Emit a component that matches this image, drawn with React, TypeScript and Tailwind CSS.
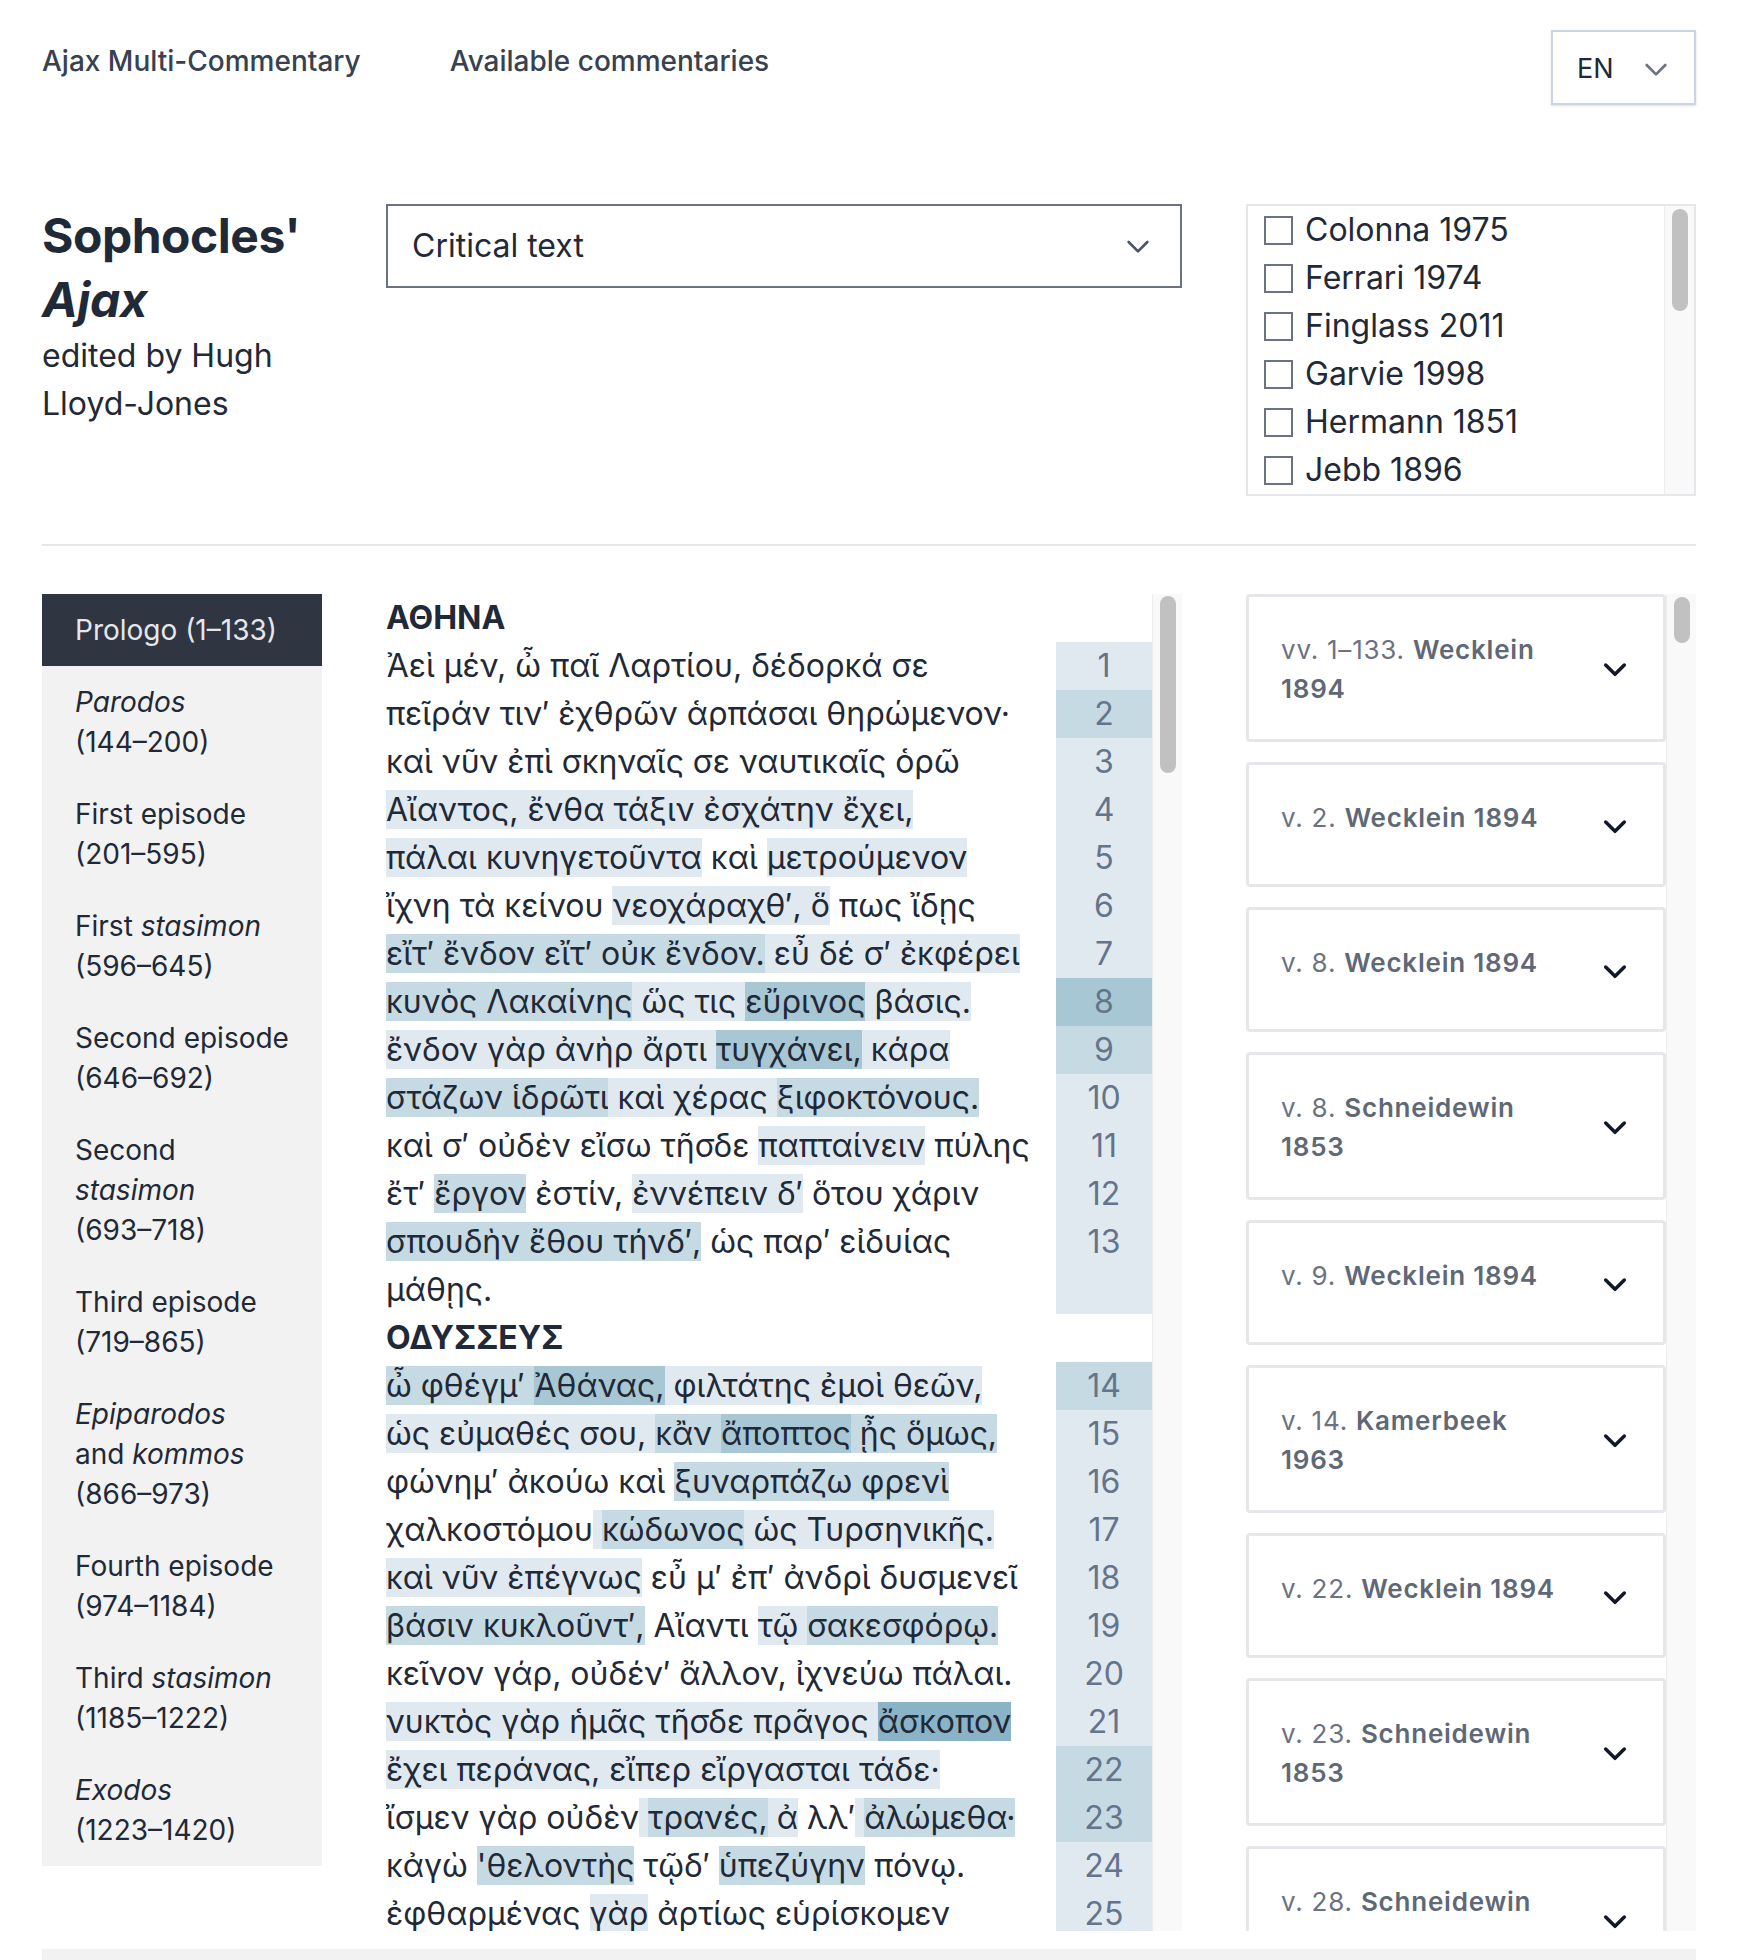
import React from 'react';

type Seg = [string, number];
type Verse = { n: number; level: number; segs: Seg[] };
type Block = { speaker: string; verses: Verse[] };

const tone = ['', 'bg-[#e1e9f0]', 'bg-[#c6dae3]', 'bg-[#a8c7d4]', 'bg-[#8bb3c7]'];

const blocks: Block[] = [
  {
    speaker: 'ΑΘΗΝΑ',
    verses: [
      { n: 1, level: 1, segs: [['Ἀεὶ μέν, ὦ παῖ Λαρτίου, δέδορκά σε', 0]] },
      { n: 2, level: 2, segs: [['πεῖράν τιν′ ἐχθρῶν ἁρπάσαι θηρώμενον·', 0]] },
      { n: 3, level: 1, segs: [['καὶ νῦν ἐπὶ σκηναῖς σε ναυτικαῖς ὁρῶ', 0]] },
      { n: 4, level: 1, segs: [['Αἴαντος, ἔνθα τάξιν ἐσχάτην ἔχει,', 1]] },
      { n: 5, level: 1, segs: [['πάλαι κυνηγετοῦντα', 1], [' καὶ ', 0], ['μετρούμενον', 1]] },
      { n: 6, level: 1, segs: [['ἴχνη τὰ κείνου ', 0], ['νεοχάραχθ′, ὅ', 1], [' πως ἴδῃς', 0]] },
      { n: 7, level: 1, segs: [['εἴτ′ ἔνδον εἴτ′ οὐκ ἔνδον.', 2], [' εὖ δέ σ′ ἐκφέρει', 1]] },
      { n: 8, level: 3, segs: [['κυνὸς Λακαίνης', 2], [' ὥς τις ', 1], ['εὔρινος', 3], [' βάσις.', 1]] },
      { n: 9, level: 2, segs: [['ἔνδον γὰρ ἀνὴρ ἄρτι ', 1], ['τυγχάνει,', 3], [' κάρα', 1]] },
      { n: 10, level: 1, segs: [['στάζων ἱδρῶτι', 2], [' καὶ χέρας ', 1], ['ξιφοκτόνους.', 2]] },
      { n: 11, level: 1, segs: [['καὶ σ′ οὐδὲν εἴσω τῆσδε ', 0], ['παπταίνειν', 1], [' πύλης', 0]] },
      { n: 12, level: 1, segs: [['ἔτ′ ', 0], ['ἔργον', 2], [' ἐστίν, ', 0], ['ἐννέπειν δ′', 1], [' ὅτου χάριν', 0]] },
      { n: 13, level: 1, segs: [['σπουδὴν ἔθου τήνδ′,', 2], [' ὡς παρ′ εἰδυίας μάθῃς.', 0]] },
    ],
  },
  {
    speaker: 'ΟΔΥΣΣΕΥΣ',
    verses: [
      { n: 14, level: 2, segs: [['ὦ φθέγμ′ ', 2], ['Ἀθάνας,', 3], [' φιλτάτης ἐμοὶ θεῶν,', 1]] },
      { n: 15, level: 1, segs: [['ὡς εὐμαθές σου, ', 1], ['κἂν ', 2], ['ἄποπτος', 3], [' ᾖς ὅμως,', 2]] },
      { n: 16, level: 1, segs: [['φώνημ′ ἀκούω καὶ ', 0], ['ξυναρπάζω φρενὶ', 2]] },
      { n: 17, level: 1, segs: [['χαλκοστόμου', 0], [' ', 1], ['κώδωνος', 2], [' ὡς Τυρσηνικῆς.', 1]] },
      { n: 18, level: 1, segs: [['καὶ νῦν ἐπέγνως', 1], [' εὖ μ′ ἐπ′ ἀνδρὶ δυσμενεῖ', 0]] },
      { n: 19, level: 1, segs: [['βάσιν κυκλοῦντ′,', 2], [' Αἴαντι ', 0], ['τῷ ', 1], ['σακεσφόρῳ.', 2]] },
      { n: 20, level: 1, segs: [['κεῖνον γάρ, οὐδέν′ ἄλλον, ἰχνεύω πάλαι.', 0]] },
      { n: 21, level: 1, segs: [['νυκτὸς γὰρ ἡμᾶς τῆσδε πρᾶγος ', 1], ['ἄσκοπον', 4]] },
      { n: 22, level: 2, segs: [['ἔχει περάνας, εἴπερ εἴργασται τάδε·', 1]] },
      { n: 23, level: 2, segs: [['ἴσμεν γὰρ οὐδὲν', 0], [' ', 1], ['τρανές,', 2], [' ἀ', 1], [' λλ′', 0], [' ', 1], ['ἀλώμεθα·', 2]] },
      { n: 24, level: 1, segs: [['κἀγὼ ', 0], ['\'θελοντὴς', 2], [' τῷδ′ ', 0], ['ὑπεζύγην', 2], [' πόνῳ.', 0]] },
      { n: 25, level: 1, segs: [['ἐφθαρμένας ', 0], ['γὰρ', 1], [' ἀρτίως εὑρίσκομεν', 0]] },
      { n: 26, level: 1, segs: [['λεηλατημένας καὶ κατηναρισμένας', 0]] },
      { n: 27, level: 1, segs: [['αὐτοῖς ποιμνίων ἐπιστάταις.', 0]] },
    ],
  },
];

const sections: React.ReactNode[] = [
  <>Prologo (1–133)</>,
  <><i>Parodos</i><br />(144–200)</>,
  <>First episode<br />(201–595)</>,
  <>First <i>stasimon</i><br />(596–645)</>,
  <>Second episode<br />(646–692)</>,
  <>Second<br /><i>stasimon</i><br />(693–718)</>,
  <>Third episode<br />(719–865)</>,
  <><i>Epiparodos</i><br />and <i>kommos</i><br />(866–973)</>,
  <>Fourth episode<br />(974–1184)</>,
  <>Third <i>stasimon</i><br />(1185–1222)</>,
  <><i>Exodos</i><br />(1223–1420)</>,
];

const editions = [
  'Colonna 1975',
  'Ferrari 1974',
  'Finglass 2011',
  'Garvie 1998',
  'Hermann 1851',
  'Jebb 1896',
  'Kamerbeek 1963',
  'Lobeck 1835',
];

const comments: [string, string][] = [
  ['vv. 1–133.', 'Wecklein 1894'],
  ['v. 2.', 'Wecklein 1894'],
  ['v. 8.', 'Wecklein 1894'],
  ['v. 8.', 'Schneidewin 1853'],
  ['v. 9.', 'Wecklein 1894'],
  ['v. 14.', 'Kamerbeek 1963'],
  ['v. 22.', 'Wecklein 1894'],
  ['v. 23.', 'Schneidewin 1853'],
  ['v. 28.', 'Schneidewin 1853'],
];

const Chevron = ({ className, width = 3 }: { className?: string; width?: number }) => (
  <svg viewBox="0 0 24 24" fill="none" stroke="currentColor" strokeWidth={width} strokeLinecap="round" strokeLinejoin="round" className={className}>
    <path d="M5 9l7 7 7-7" />
  </svg>
);

export default function App() {
  return (
    <div className="min-h-screen bg-white text-[#1f2937] font-['Inter','Noto_Sans',sans-serif]">
      <header className="flex items-start justify-between px-[42px] pt-[30px]">
        <nav className="flex gap-[89px] pt-[11px] text-[28px] leading-[40px] font-medium text-[#374151]">
          <span>Ajax Multi-Commentary</span>
          <span>Available commentaries</span>
        </nav>
        <div className="w-[145px] h-[75px] border-2 border-[#cbd5e1] shadow-sm flex items-center justify-between pl-[24px] pr-[22px] pt-[3px]">
          <span className="text-[27px]">EN</span>
          <Chevron className="w-[32px] h-[32px] text-[#6b7280]" width={2} />
        </div>
      </header>

      <section className="mx-[42px] mt-[99px] grid grid-cols-[280px_1fr_450px] gap-x-[64px] pb-[48px] border-b-2 border-[#e5e7eb]">
        <div>
          <h1 className="text-[48px] leading-[64px] font-bold tracking-[-0.01em]">
            Sophocles' <i>Ajax</i>
          </h1>
          <p className="text-[32px] leading-[48px]">edited by Hugh Lloyd-Jones</p>
        </div>
        <div className="self-start h-[84px] border-2 border-[#6b7280] flex items-center justify-between pl-[24px] pr-[26px]">
          <span className="text-[32px]">Critical text</span>
          <Chevron className="w-[32px] h-[32px] text-[#4b5563]" width={2} />
        </div>
        <div className="h-[292px] border-2 border-[#e5e7eb] flex overflow-hidden">
          <ul className="flex-1 pl-[16px] overflow-hidden">
            {editions.map((e) => (
              <li key={e} className="flex items-center gap-[12px] h-[48px] text-[32px]">
                <span className="w-[29px] h-[29px] border-2 border-[#6b7280] shrink-0" />
                {e}
              </li>
            ))}
          </ul>
          <div className="w-[30px] shrink-0 bg-[#f9f9f9] border-l border-[#ececec] flex justify-center">
            <div className="mt-[3px] w-[16px] h-[102px] rounded-full bg-[#c1c1c1]" />
          </div>
        </div>
      </section>

      <main className="mx-[42px] mt-[48px] grid grid-cols-[280px_1fr_450px] gap-x-[64px]">
        <aside className="self-start bg-[#f2f2f2] text-[28px] leading-[40px]">
          {sections.map((s, i) => (
            <div key={i} className={`pl-[33px] pr-[20px] py-[16px] ${i === 0 ? 'bg-[#2f3541] text-[#e5e7eb]' : ''}`}>
              {s}
            </div>
          ))}
        </aside>

        <div className="h-[1337px] flex overflow-hidden">
          <div className="flex-1 overflow-hidden text-[32px] leading-[48px]">
            {blocks.map((b) => (
              <div key={b.speaker}>
                <div className="font-bold">{b.speaker}</div>
                {b.verses.map((v) => (
                  <div key={v.n} className="flex">
                    <p className="flex-1 pr-[16px]">
                      {v.segs.map(([t, l], i) => (
                        <span key={i} className={tone[l]}>{t}</span>
                      ))}
                    </p>
                    <div className={`w-[96px] shrink-0 text-center text-[#64748b] ${tone[v.level]}`}>{v.n}</div>
                  </div>
                ))}
              </div>
            ))}
          </div>
          <div className="w-[30px] shrink-0 bg-[#f9f9f9] border-l border-[#ececec] flex justify-center">
            <div className="mt-[2px] w-[16px] h-[177px] rounded-full bg-[#c1c1c1]" />
          </div>
        </div>

        <div className="h-[1337px] flex overflow-hidden">
          <div className="flex-1 flex flex-col gap-[20px] overflow-hidden">
            {comments.map(([v, ed], i) => (
              <div key={i} className="shrink-0 border-[3px] border-[#e5e7eb] rounded-[4px] pl-[32px] pr-[32px] pt-[33px] pb-[31px] flex items-start justify-between">
                <p className="w-[284px] text-[26px] leading-[39px] tracking-[0.03em] text-[#6b7280]">
                  {v} <span className="font-semibold text-[#5f6877]">{ed}</span>
                </p>
                <div className="h-[55px] self-center flex items-center">
                  <Chevron className="w-[32px] h-[32px] text-[#111827]" width={2.6} />
                </div>
              </div>
            ))}
          </div>
          <div className="w-[30px] shrink-0 bg-[#f9f9f9] border-l border-[#ececec] flex justify-center">
            <div className="mt-[3px] w-[16px] h-[46px] rounded-full bg-[#c1c1c1]" />
          </div>
        </div>
      </main>

      <div className="mx-[42px] mt-[18px] h-[60px] bg-[#f2f2f2]" />
    </div>
  );
}
